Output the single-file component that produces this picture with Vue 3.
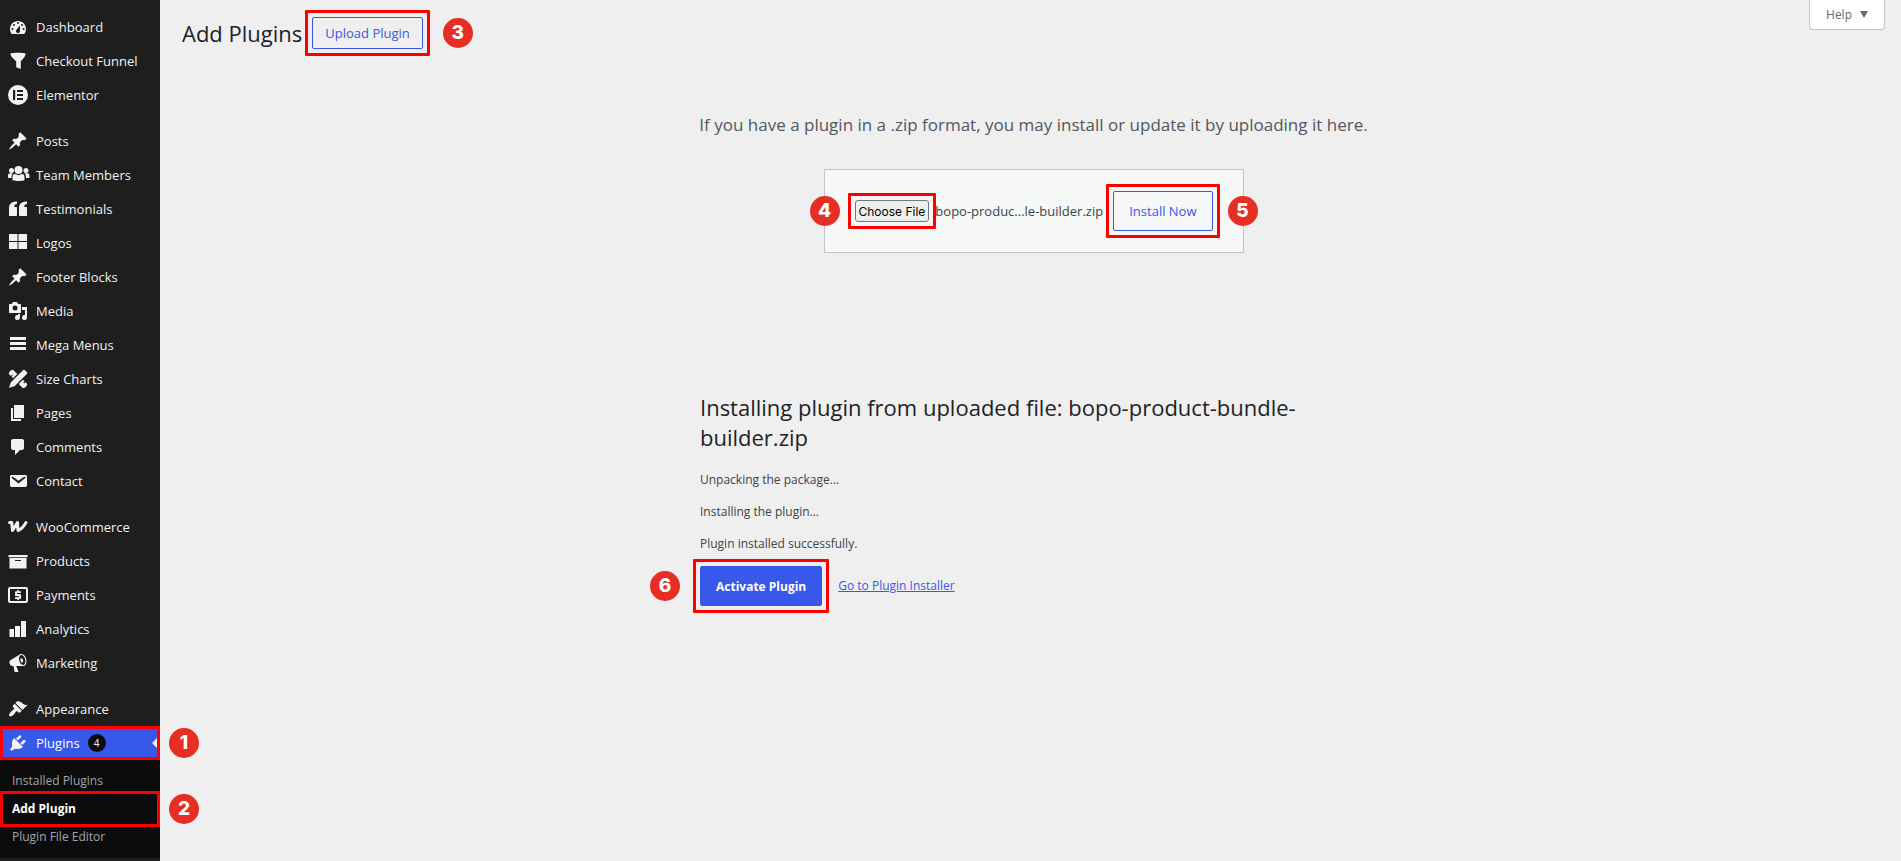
<script setup>
import { ref } from 'vue';

const menuGroups = [
  [
    { name: 'Dashboard', icon: 'dashboard' },
    { name: 'Checkout Funnel', icon: 'funnel' },
    { name: 'Elementor', icon: 'elementor' }
  ],
  [
    { name: 'Posts', icon: 'pin' },
    { name: 'Team Members', icon: 'groups' },
    { name: 'Testimonials', icon: 'quote' },
    { name: 'Logos', icon: 'grid' },
    { name: 'Footer Blocks', icon: 'pin' },
    { name: 'Media', icon: 'media' },
    { name: 'Mega Menus', icon: 'menu' },
    { name: 'Size Charts', icon: 'tools' },
    { name: 'Pages', icon: 'pages' },
    { name: 'Comments', icon: 'comment' },
    { name: 'Contact', icon: 'email' }
  ],
  [
    { name: 'WooCommerce', icon: 'woo' },
    { name: 'Products', icon: 'archive' },
    { name: 'Payments', icon: 'payments' },
    { name: 'Analytics', icon: 'chart' },
    { name: 'Marketing', icon: 'megaphone' }
  ],
  [
    { name: 'Appearance', icon: 'brush' },
    { name: 'Plugins', icon: 'plug', count: 4, current: true, step: 1 }
  ]
];

const submenu = [
  { name: 'Installed Plugins' },
  { name: 'Add Plugin', current: true, step: 2 },
  { name: 'Plugin File Editor' }
];

const icons = {
  dashboard: 'M3.76 17h12.48A7.96 7.96 0 0 0 18 12c0-4.42-3.58-8-8-8s-8 3.58-8 8c0 1.89.66 3.63 1.76 5zM10 5a1 1 0 1 1 0 2 1 1 0 0 1 0-2zM6 7a1 1 0 1 1 0 2 1 1 0 0 1 0-2zm8 0a1 1 0 1 1 0 2 1 1 0 0 1 0-2zm-5.4 5.6L12 8.6V14a2 2 0 1 1-3.4-1.4zM4.4 11a1 1 0 1 1 0 2 1 1 0 0 1 0-2zm11.2 0a1 1 0 1 1 0 2 1 1 0 0 1 0-2z',
  funnel: 'M2.5 2.8C2.5 1.5 17.5 1.5 17.5 2.8c0 2-1 4-4.7 7.4V18l-4.6-1.8v-6C4 6.8 2.5 4.8 2.5 2.8z',
  elementor: 'M10 0a10 10 0 1 0 0 20 10 10 0 0 0 0-20zM5 5h2.2v10H5zM9 5h6v2H9zM9 9h6v2H9zM9 13h6v2H9z',
  pin: 'M10.44 3.02l1.82-1.82 6.36 6.35-1.83 1.82c-1.05-.68-2.48-.57-3.41.36l-.75.75c-.92.93-1.04 2.35-.35 3.41l-1.83 1.82-2.41-2.41-2.8 2.79c-.42.42-3.38 2.71-3.8 2.29s1.86-3.39 2.28-3.81l2.79-2.79L4.1 9.36l1.83-1.82c1.05.69 2.48.57 3.4-.36l.75-.75c.93-.92 1.05-2.35.36-3.41z',
  groups: 'M10.5 1a4 4 0 1 1 0 8 4 4 0 0 1 0-8zM3.5 3a2.5 2.5 0 1 1 0 5 2.5 2.5 0 0 1 0-5zM18 3a2.5 2.5 0 1 1 0 5 2.5 2.5 0 0 1 0-5zM4.5 15V12c0-2 1-3 2.5-3l3.5 1.3L14 9c1.5 0 2.5 1 2.5 3v3c0 1.3-12 1.3-12 0zM0 12.5v-2C0 9 1 8.3 2 8.3h3c-1 1-1.5 2.2-1.5 4.7-1.5 0-3.5.3-3.5-.5zM21.5 12.5v-2c0-1.5-1-2.2-2-2.2h-3c1 1 1.5 2.2 1.5 4.7 1.5 0 3.5.3 3.5-.5z',
  quote: 'M9 2.5V5C7 5 6.3 6 6.3 8H8c.7 0 1 .4 1 1v7c0 .7-.4 1-1 1H2c-.7 0-1-.3-1-1V9c0-4 2.5-6.5 8-6.5zM19 2.5V5c-2 0-2.7 1-2.7 3H18c.7 0 1 .4 1 1v7c0 .7-.4 1-1 1h-6c-.7 0-1-.3-1-1V9c0-4 2.5-6.5 8-6.5z',
  grid: 'M1 1h8.5v7H1zM10.5 1H19v7h-8.5zM1 9h8.5v7H1zM10.5 9H19v7h-8.5z',
  media: 'M13 11V4c0-.55-.45-1-1-1h-1.67L9 1H5L3.67 3H2c-.55 0-1 .45-1 1v7c0 .55.45 1 1 1h10c.55 0 1-.45 1-1zM7 4.5a2.5 2.5 0 1 1 0 5 2.5 2.5 0 0 1 0-5zM14 6h5v10.5a2.5 2.5 0 1 1-2-2.45V9h-3zM10 14.05V13h2v3.5a2.5 2.5 0 1 1-2-2.45z',
  menu: 'M2 2h16v3H2zM2 7h16v3H2zM2 12h16v3H2z',
  tools: 'M5 .8L9.3 5.1 5.1 9.3 3.6 7.8 4.8 6.6 4 5.8 2.8 7 .8 5C.8 3 3 .8 5 .8zM14.9 10.7l1.7 1.7-1.4 1.4.8.8 1.4-1.4 1.8 1.8c0 2-2.2 4.2-4.2 4.2l-4.3-4.3zM15 1.2c.6-.6 1.300-.6 1.900 0l1.900 1.900c.6.6.6 1.300 0 1.900L6.500 17.300 1 18.800l1.700-5.300z',
  pages: 'M6 15V2h10v13H6zm-1 1h8v2H3V5h2v11z',
  comment: 'M5 2h9c1.1 0 2 .9 2 2v7c0 1.1-.9 2-2 2h-2l-5 5v-5H5c-1.1 0-2-.9-2-2V4c0-1.1.9-2 2-2z',
  email: 'M3.87 4h13.25C18.37 4 19 4.59 19 5.79v8.42c0 1.19-.63 1.79-1.88 1.79H3.87c-1.25 0-1.88-.6-1.88-1.79V5.79c0-1.2.63-1.79 1.88-1.79zm6.62 8.6l6.74-5.53c.24-.2.43-.66.13-1.07-.29-.41-.82-.42-1.17-.17l-5.7 3.86L4.8 5.83c-.35-.25-.88-.24-1.17.17-.3.41-.11.87.13 1.07z',
  archive: 'M.5 4h19v2.2H.5zM1.5 7h17v10.5h-17zM13 10V9H7v1z',
  payments: 'M2 2h16a2 2 0 0 1 2 2v12a2 2 0 0 1-2 2H2a2 2 0 0 1-2-2V4a2 2 0 0 1 2-2zM2 4v12h16V4zM9.2 5h1.6v1.2H13V8H9v1h3a1 1 0 0 1 1 1v3a1 1 0 0 1-1 1h-1.2v1H9.2v-1H7v-1.8h4v-1H8a1 1 0 0 1-1-1v-3a1 1 0 0 1 1-1h1.2z',
  chart: 'M18 18V2h-5v16zM12 18V7H7v11zM6 18v-8H1.5v8z',
  megaphone: 'M18.15 5.94c.46 1.62.38 3.22-.02 4.48-.42 1.28-1.26 2.18-2.3 2.48-.3.1-.7.1-1 .1H8.2l2.22 5.5c.02.3-.2.5-.48.5H6.95c-.3 0-.5-.2-.48-.5l-1-5.5H4.25c-1.2 0-2.2-1-2.62-2.52-.5-1.7 0-3 1.06-3.5l9-5.4c.5-.3.6-.4 1-.48 1.04-.3 2.24.1 3.22.98s1.82 2.24 2.24 3.86zm-2.6 5.98c1.5-.4 2.2-2.7 1.6-5.7-.8-2.8-2.6-4.5-4.24-4.12-1.6.5-2.3 2.9-1.64 5.72.8 2.8 2.6 4.5 4.28 4.1zM12.5 5.5c.8-.5 2.2.1 2.6 1.7.3 1.5-.3 2.4-1.6 2.4-.9-1-1.3-2.5-1-4.1z',
  brush: 'M14.48 11.06L7.41 3.99l1.5-1.5c.5-.56 2.3-.47 3.51.32 1.21.8 1.43 1.28 2.91 2.1 1.18.64 2.45 1.26 4.45.85zm-.71.71L6.7 4.7 4.93 6.47c-.39.39-.39 1.02 0 1.41l1.06 1.06c.39.39.39 1.03 0 1.42-.6.6-1.43 1.11-2.21 1.69-.35.26-.7.53-1.01.84C1.43 14.23.4 16.08 1.4 17.07c.99 1 2.84-.03 4.18-1.36.31-.31.58-.66.85-1.02.57-.78 1.08-1.61 1.69-2.21.39-.39 1.02-.39 1.41 0l1.06 1.06c.39.39 1.02.39 1.41 0z',
  plug: 'M13.11 4.36L9.87 7.6 8 5.73l3.24-3.24c.35-.34 1.05-.2 1.56.32.52.51.66 1.21.31 1.55zm-8 1.77l.91-1.12 9.01 9.01-1.19.84c-.71.71-2.63 1.16-3.82 1.16H6.14L4.9 17.26c-.59.59-1.54.59-2.12 0-.59-.58-.59-1.53 0-2.12l1.24-1.24v-3.88c0-1.13.4-3.19 1.09-3.89zm7.26 3.97l3.24-3.24c.34-.35 1.04-.21 1.55.31.52.51.66 1.21.31 1.55l-3.24 3.25z'
};

const fileInput = ref(null);
const fileName = ref('bopo-product-bundle-builder.zip');
const steps = ['Unpacking the package…', 'Installing the plugin…', 'Plugin installed successfully.'];

// keep both ends of a long name, like the browser's own file field
const shorten = (name) => (name.length > 28 ? `${name.slice(0, 11)}...${name.slice(-14)}` : name);

const handleFile = (ev) => {
  const file = ev.target.files[0];
  if (file) fileName.value = file.name;
};
</script>

<template>
  <div class="admin">
    <nav class="sidebar" aria-label="Main menu">
      <ul v-for="(group, i) in menuGroups" :key="i" class="menu-group">
        <li v-for="item in group" :key="item.name" class="menu-item">
          <a href="#" class="menu-link" :class="{ current: item.current, framed: item.step }">
            <svg class="menu-icon" viewBox="0 0 20 20" aria-hidden="true">
              <path v-if="item.icon === 'woo'" class="woo" d="M1.5 5.5h2.2L4.5 13.5 9.5 5.5 10 13.5C13 12.5 15.5 10 18 5.5" />
              <path v-else fill-rule="evenodd" :d="icons[item.icon]" />
            </svg>
            {{ item.name }}
            <span v-if="item.count" class="count">{{ item.count }}</span>
          </a>
          <span v-if="item.step" class="step step-side">{{ item.step }}</span>
        </li>
      </ul>
      <ul class="submenu">
        <li v-for="item in submenu" :key="item.name" class="submenu-item" :class="{ current: item.current }">
          <a href="#" class="submenu-link" :class="{ framed: item.step }">{{ item.name }}</a>
          <span v-if="item.step" class="step step-side">{{ item.step }}</span>
        </li>
      </ul>
    </nav>

    <main class="content">
      <header class="page-head">
        <h1>Add Plugins</h1>
        <button type="button" class="btn btn-small framed">Upload Plugin</button>
        <span class="step">3</span>
        <button type="button" class="help">Help <span class="arrow"></span></button>
      </header>

      <section class="upload">
        <p class="upload-help">If you have a plugin in a .zip format, you may install or update it by uploading it here.</p>
        <form class="upload-form" @submit.prevent>
          <span class="step step-left">4</span>
          <input ref="fileInput" class="file-input" type="file" accept=".zip" aria-label="Plugin zip file" @change="handleFile">
          <button type="button" class="choose framed" @click="fileInput.click()">Choose File</button>
          <span class="file-name">{{ shorten(fileName) }}</span>
          <button type="submit" class="btn framed">Install Now</button>
          <span class="step step-right">5</span>
        </form>
      </section>

      <section class="result">
        <h2>Installing plugin from uploaded file: bopo-product-bundle-builder.zip</h2>
        <p v-for="text in steps" :key="text">{{ text }}</p>
        <div class="actions">
          <span class="step step-action">6</span>
          <button type="button" class="btn btn-primary framed">Activate Plugin</button>
          <a href="#">Go to Plugin Installer</a>
        </div>
      </section>
    </main>
  </div>
</template>

<style>
body {
  margin: 0;
  background: #efefef;
}
</style>

<style scoped>
.admin {
  display: flex;
  min-height: 100vh;
  background: #efefef;
  color: #3c434a;
  font-family: "Open Sans", "Noto Sans", sans-serif;
  font-size: 12px;
  line-height: 20px;
}

.admin *,
.admin *::before,
.admin *::after {
  box-sizing: border-box;
}

ul,
h1,
h2,
p {
  margin: 0;
  padding: 0;
}

ul {
  list-style: none;
}

button {
  font-family: inherit;
  cursor: pointer;
}

.sidebar {
  flex: 0 0 160px;
  padding-top: 10px;
  background: #1e1e1e;
}

.menu-group + .menu-group {
  margin-top: 12px;
}

.menu-item,
.submenu-item {
  position: relative;
}

.menu-link {
  display: flex;
  align-items: center;
  gap: 8px;
  height: 34px;
  padding: 0 8px;
  color: #f0f0f1;
  font-size: 13px;
  text-decoration: none;
}

.menu-link.current {
  background: #3858e9;
  color: #fff;
}

.menu-link.current::after {
  content: "";
  position: absolute;
  top: 9px;
  right: 0;
  border: 8px solid transparent;
  border-right-color: #efefef;
  border-left: 0;
}

/* red frame around the control of each step */
.framed {
  position: relative;
}

.framed::before {
  content: "";
  position: absolute;
  z-index: 1;
  inset: -8px;
  border: 3px solid #f00;
  border-radius: 1px;
  pointer-events: none;
}

.menu-link.framed::before {
  inset: 0;
}

.submenu-link.framed::before {
  inset: -4px 0;
}

.menu-icon {
  flex: none;
  width: 20px;
  height: 20px;
  fill: #f3f1f1;
  overflow: visible;
}

.woo {
  fill: none;
  stroke: #f3f1f1;
  stroke-width: 3;
  stroke-linecap: round;
  stroke-linejoin: round;
}

.count {
  width: 18px;
  height: 18px;
  border-radius: 9px;
  background: #0c0c0c;
  color: #fff;
  font-size: 10px;
  line-height: 18px;
  text-align: center;
}

.submenu {
  padding: 7px 0;
  background: #0c0c0c;
}

.submenu-link {
  display: block;
  padding: 4px 12px;
  color: #a5a5a5;
  text-decoration: none;
}

.submenu-item.current .submenu-link {
  color: #fff;
  font-weight: 700;
}

.step {
  flex: none;
  width: 30px;
  height: 30px;
  border-radius: 50%;
  background: #e62e25;
  color: #fff;
  font-family: Inter, sans-serif;
  font-size: 19px;
  font-weight: 800;
  line-height: 30px;
  text-align: center;
}

.step-side {
  position: absolute;
  top: 50%;
  left: 100%;
  margin: -15px 0 0 9px;
}

.content {
  flex: 1;
  min-width: 0;
  padding: 0 16px 40px 22px;
}

.page-head {
  display: flex;
  align-items: center;
  padding-top: 17px;
}

h1,
h2 {
  color: #1d2327;
  font-size: 22px;
  font-weight: 400;
  line-height: 30px;
}

.page-head .btn {
  margin: 0 20px 0 10px;
}

.help {
  display: flex;
  align-items: center;
  gap: 8px;
  height: 30px;
  margin: -17px 0 0 auto;
  padding: 0 16px;
  align-self: flex-start;
  border: 1px solid #c3c4c7;
  border-top: 0;
  border-radius: 0 0 4px 4px;
  background: #fff;
  color: #646970;
  font-size: 12px;
}

.arrow {
  border: 4px solid transparent;
  border-top: 7px solid #646970;
  border-bottom: 0;
}

.btn {
  flex: none;
  height: 40px;
  padding: 0 15px;
  border: 1px solid #3858e9;
  border-radius: 2px;
  background: transparent;
  color: #3858e9;
  font-size: 13px;
}

.btn-small {
  height: 32px;
  padding: 0 12px;
}

.btn-primary {
  background: #3858e9;
  color: #fff;
  font-size: 12px;
  font-weight: 700;
}

.upload {
  padding-top: 62px;
}

.upload-help {
  color: #50575e;
  font-size: 17px;
  line-height: 28px;
  text-align: center;
}

.upload-form {
  position: relative;
  display: flex;
  align-items: center;
  max-width: 420px;
  margin: 30px auto 0;
  padding: 21px 30px;
  border: 1px solid #c3c4c7;
  background: #f6f7f7;
}

.step-left,
.step-right {
  position: absolute;
  top: 50%;
  margin-top: -15px;
}

.step-left {
  left: -15px;
}

.step-right {
  right: -15px;
}

.file-input {
  display: none;
}

.choose {
  flex: none;
  height: 22px;
  padding: 0 3px;
  border: 1px solid #767676;
  border-radius: 3px;
  background: #efefef;
  color: #000;
  font-family: Inter, sans-serif;
  font-size: 12px;
}

.file-name {
  flex: 1;
  padding-left: 6px;
  color: #3c434a;
  font-size: 13px;
  white-space: nowrap;
}

.result {
  max-width: 667px;
  margin: 139px auto 0;
}

.result p {
  margin-top: 12px;
}

.result h2 + p {
  margin-top: 18px;
}

.actions {
  position: relative;
  display: flex;
  align-items: center;
  gap: 16px;
  margin-top: 12px;
}

.step-action {
  position: absolute;
  right: 100%;
  margin-right: 20px;
}

.actions a {
  color: #3858e9;
}
</style>
